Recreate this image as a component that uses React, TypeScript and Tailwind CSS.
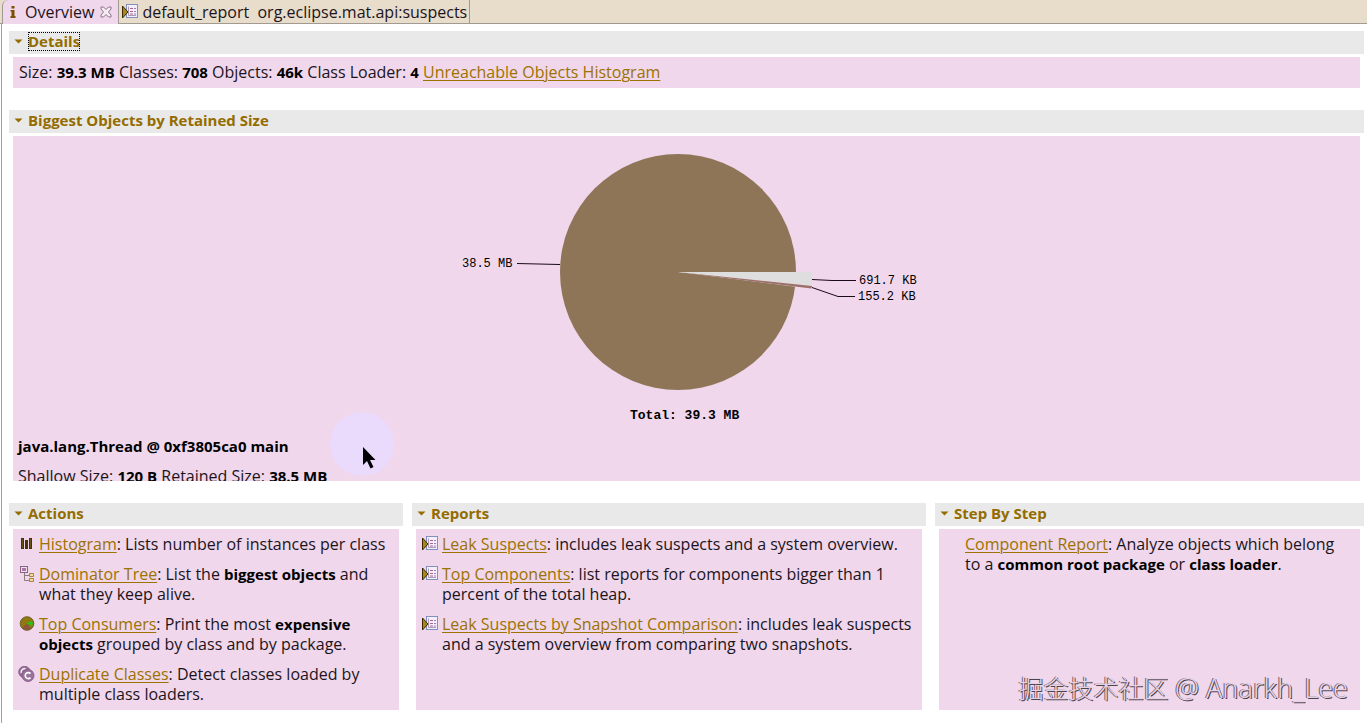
import React from "react";

const linkCls = "text-[#9c7200] underline decoration-1 underline-offset-2";

function L({ children }: { children: React.ReactNode }) {
  return <a href="#" className={linkCls}>{children}</a>;
}

function B({ children }: { children: React.ReactNode }) {
  return <b className="text-[15px] font-bold text-black">{children}</b>;
}

function ReportIcon() {
  return (
    <svg width="16" height="16" viewBox="0 0 16 16" className="shrink-0" aria-hidden="true">
      <rect x="4.500" y=".5" width="11" height="13" fill="#f6eefa" stroke="#7f8fc0" />
      <path d="M6.500 2.500v9h7.500" fill="none" stroke="#a99ab8" />
      <path d="M8 4.500h3M8 7.500h3M8 10h3" stroke="#b0608a" />
      <path d="M12 4.500h2M12 7.500h2M12 10h2" stroke="#8a8ac4" />
      <path d="M.5 2v12L6 8z" fill="#a8861a" stroke="#3c2a00" />
    </svg>
  );
}

function HistogramIcon() {
  return (
    <svg width="16" height="16" viewBox="0 0 16 16" aria-hidden="true">
      <path d="M2 2h3v11H2zM6 4h3v9H6zM10 2h3v11h-3z" fill="#463208" />
      <path d="M3.500 3v9M11.500 3v9" stroke="#76601c" strokeWidth=".7" />
    </svg>
  );
}

function TreeIcon() {
  return (
    <svg width="16" height="16" viewBox="0 0 16 16" aria-hidden="true" fill="none">
      <rect x="1.500" y=".5" width="7" height="6" fill="#f3e2f3" stroke="#8a6285" />
      <path d="M3 2h4v3H3z" fill="#a9789f" />
      <path d="M5.500 7v7.500H10M5.500 9.500H10" stroke="#8a7a78" />
      <path d="M10.500 7.500h4v3h-4zM10.500 12.500h4v3h-4z" fill="#f2dda0" stroke="#a88536" />
    </svg>
  );
}

function PieIcon() {
  return (
    <svg width="16" height="16" viewBox="0 0 16 16" aria-hidden="true">
      <circle cx="8" cy="7.500" r="6.800" fill="#8f7a10" stroke="#5e4a10" strokeWidth=".8" />
      <path d="M8 7.500 3 12A6.500 6.500 0 0 0 12 12.700z" fill="#8c5540" />
      <path d="M8 7.500 13 4.700A6.300 6.300 0 0 1 13.300 10z" fill="#18c81c" />
    </svg>
  );
}

function DuplicateIcon() {
  return (
    <svg width="17" height="16" viewBox="0 0 17 16" aria-hidden="true" fill="none" className="-ml-px">
      <circle cx="6.500" cy="6" r="5.800" fill="#96709a" stroke="#7d5682" strokeWidth=".8" />
      <path d="M7.500 2.800A3.500 3.500 0 0 0 3.200 7" stroke="#fff" strokeWidth="1.300" />
      <circle cx="10" cy="9.500" r="6" fill="#9a729c" stroke="#7d5682" strokeWidth=".8" />
      <path d="M12.500 7.600a3 3 0 1 0 0 4" stroke="#fff" strokeWidth="1.600" />
    </svg>
  );
}

function Section({ title, focused, className, children }: {
  title: string; focused?: boolean; className?: string; children: React.ReactNode;
}) {
  return (
    <section className="flex min-w-0 flex-col gap-[3px]">
      <h2 className="flex h-[23px] items-start bg-[#e9e9e9] pt-px pl-[5px]">
        <button type="button" className="flex items-center gap-[5px] text-[15px] font-bold leading-[19px] text-[#946c00]">
          <svg width="9" height="5" viewBox="0 0 9 5" aria-hidden="true"><path d="M.5.5h8l-4 4z" fill="#946c00" /></svg>
          <span className={focused ? "outline-1 -outline-offset-1 outline-dotted outline-black" : ""}>{title}</span>
        </button>
      </h2>
      <div className={"mx-1 bg-[#f0d7eb] " + (className ?? "")}>{children}</div>
    </section>
  );
}

function Item({ icon, children }: { icon?: React.ReactNode; children: React.ReactNode }) {
  return (
    <li className="flex">
      <span className="flex w-5 shrink-0 pt-[2px]">{icon}</span>
      <span className="min-w-0">{children}</span>
    </li>
  );
}

function Chart() {
  return (
    <svg width="470" height="294" viewBox="452 136 470 294" className="mx-auto block font-[Liberation_Mono,monospace] text-xs">
      <circle cx="678" cy="272" r="118" fill="#8e7558" />
      <path d="M678 272 813 289V272z" fill="#f0d7eb" />
      <path d="M678 272H812.500L812 286z" fill="#dedede" />
      <path d="M678 272 812 286 811.500 288.500z" fill="#9c7068" />
      <path d="M517 263.500 560 264.500M812 279.500 832 280.500H856M812 287.500 838 296.500H855" fill="none" stroke="#1a0a18" />
      <text x="462" y="267">38.5 MB</text>
      <text x="859" y="284">691.7 KB</text>
      <text x="858" y="300">155.2 KB</text>
      <text x="630" y="419" className="text-[13px] font-bold">Total: 39.3 MB</text>
    </svg>
  );
}

export default function App() {
  return (
    <div className="min-h-screen bg-white font-[Open_Sans,sans-serif] text-base leading-5 text-[#1c141c]">
      <nav className="flex h-6 border-b border-[#a09a92] bg-[#e8dccb] pl-[2px]">
        <button type="button" className="-mb-px flex items-center rounded-tl-md border-x border-[#a09a92] bg-[#f0d7eb] pr-[6px] pl-[7px]">
          <svg width="6" height="12" viewBox="0 0 6 12" aria-hidden="true"><path d="M1.500 0h3v2.500h-3zM.5 4h4v6h1v2H.5v-2h1V5.500h-1z" fill="#7a5200" /></svg>
          <span className="ml-[9px]">Overview</span>
          <svg className="ml-[6px]" width="12" height="12" viewBox="0 0 12 12" aria-hidden="true">
            <path d="M1 1h2.500L6 3.500 8.500 1H11v2L8.500 6 11 9v2H8.500L6 8.500 3.500 11H1V9l2.500-3L1 3z" fill="#f6eaf4" stroke="#7c6a78" strokeWidth=".9" />
          </svg>
        </button>
        <button type="button" className="flex items-center gap-1 border-r border-[#a09a92] pr-[2px] pl-[3px]">
          <ReportIcon />
          <span className="whitespace-pre">default_report  org.eclipse.mat.api:suspects</span>
        </button>
      </nav>
      <main className="ml-px flex min-h-[699px] flex-col gap-[22px] border-l border-[#a0a0a0] pt-[7px] pr-[3px] pl-[7px]">
        <Section title="Details" focused className="px-[6px] pt-[5px] pb-[6px]">
          Size: <B>39.3 MB</B> Classes: <B>708</B> Objects: <B>46k</B> Class Loader: <B>4</B> <L>Unreachable Objects Histogram</L>
        </Section>
        <Section title="Biggest Objects by Retained Size" className="relative h-[345px] overflow-hidden">
          <Chart />
          <div className="absolute top-[276px] left-[317px] size-16 rounded-full bg-[#eadafb]">
            <svg className="absolute top-[34px] left-8" width="15" height="24" viewBox="0 0 15 24" aria-hidden="true">
              <path d="M1 1v18l4-4 3.500 7.500 3-1.500L8 14h5.500z" fill="#000" />
            </svg>
          </div>
          <div className="relative flex flex-col gap-[10px] px-[5px] pt-[6px]">
            <p><B>java.lang.Thread @ 0xf3805ca0 main</B></p>
            <p>Shallow Size: <B>120 B</B> Retained Size: <B>38.5 MB</B></p>
          </div>
        </Section>
        <div className="grid grid-cols-[394fr_514fr_429fr] gap-[9px]">
          <Section title="Actions" className="flex-1 px-[6px] pt-[5px] pb-[6px]">
            <ul className="flex flex-col gap-[10px]">
              <Item icon={<HistogramIcon />}><L>Histogram</L>: Lists number of instances per class</Item>
              <Item icon={<TreeIcon />}><L>Dominator Tree</L>: List the <B>biggest objects</B> and what they keep alive.</Item>
              <Item icon={<PieIcon />}><L>Top Consumers</L>: Print the most <B>expensive objects</B> grouped by class and by package.</Item>
              <Item icon={<DuplicateIcon />}><L>Duplicate Classes</L>: Detect classes loaded by multiple class loaders.</Item>
            </ul>
          </Section>
          <Section title="Reports" className="flex-1 px-[6px] pt-[5px] pb-[6px]">
            <ul className="flex flex-col gap-[10px]">
              <Item icon={<ReportIcon />}><L>Leak Suspects</L>: includes leak suspects and a system overview.</Item>
              <Item icon={<ReportIcon />}><L>Top Components</L>: list reports for components bigger than 1 percent of the total heap.</Item>
              <Item icon={<ReportIcon />}><L>Leak Suspects by Snapshot Comparison</L>: includes leak suspects and a system overview from comparing two snapshots.</Item>
            </ul>
          </Section>
          <Section title="Step By Step" className="relative flex-1 pt-[5px] pr-4 pb-[6px] pl-[6px]">
            <ul className="flex flex-col gap-[10px]">
              <Item><L>Component Report</L>: Analyze objects which belong to a <B>common root package</B> or <B>class loader</B>.</Item>
            </ul>
            <p className="absolute right-3 bottom-[5px] whitespace-nowrap font-[Noto_Sans,Noto_Sans_CJK_SC,sans-serif] text-[25px] font-light leading-[34px] text-[#e6d2e4] [text-shadow:1px_1px_0_#4c444c,-1px_0_0_#6c606c]">掘金技术社区 <span className="text-[27px]">@ Anarkh_Lee</span></p>
          </Section>
        </div>
      </main>
    </div>
  );
}
